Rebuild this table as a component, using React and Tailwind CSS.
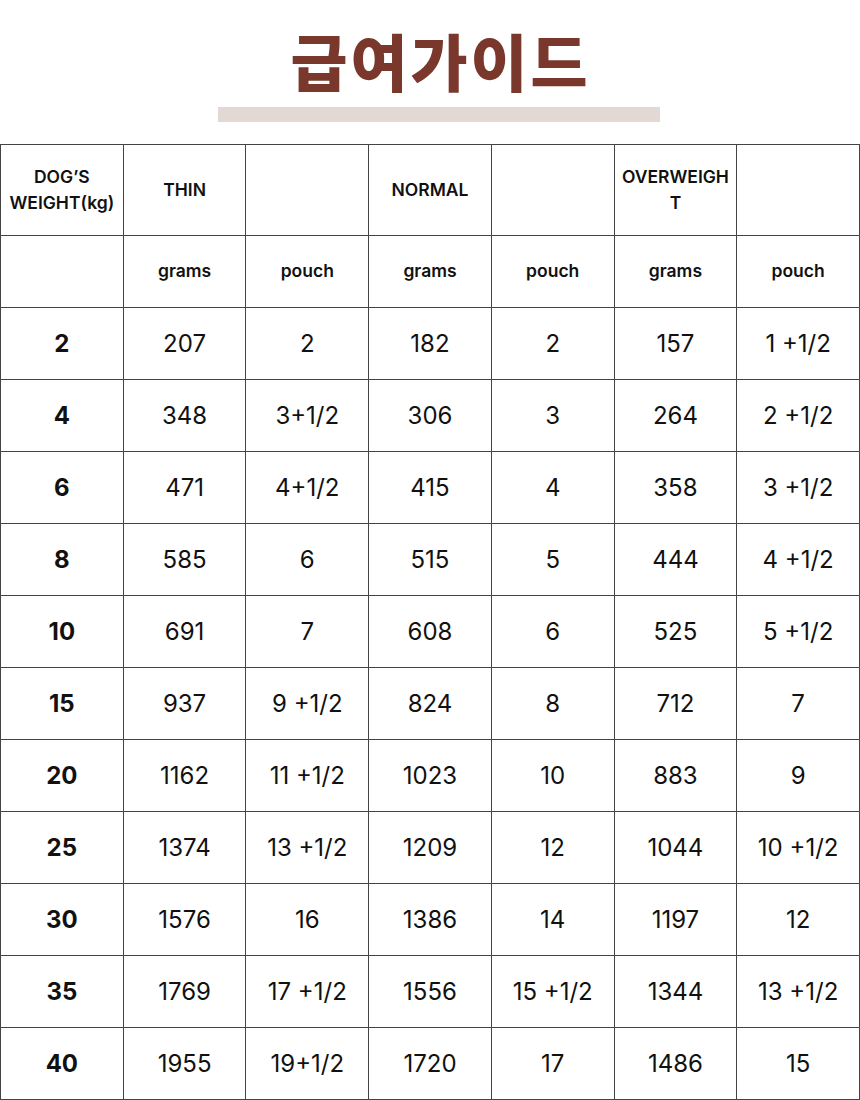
import React from "react";

const rows = [
  ["2", "207", "2", "182", "2", "157", "1 +1/2"],
  ["4", "348", "3+1/2", "306", "3", "264", "2 +1/2"],
  ["6", "471", "4+1/2", "415", "4", "358", "3 +1/2"],
  ["8", "585", "6", "515", "5", "444", "4 +1/2"],
  ["10", "691", "7", "608", "6", "525", "5 +1/2"],
  ["15", "937", "9 +1/2", "824", "8", "712", "7"],
  ["20", "1162", "11 +1/2", "1023", "10", "883", "9"],
  ["25", "1374", "13 +1/2", "1209", "12", "1044", "10 +1/2"],
  ["30", "1576", "16", "1386", "14", "1197", "12"],
  ["35", "1769", "17 +1/2", "1556", "15 +1/2", "1344", "13 +1/2"],
  ["40", "1955", "19+1/2", "1720", "17", "1486", "15"],
];

const header1 = ["DOG’S\nWEIGHT(kg)", "THIN", "", "NORMAL", "", "OVERWEIGH\nT", ""];
const header2 = ["", "grams", "pouch", "grams", "pouch", "grams", "pouch"];

export default function App() {
  return (
    <div className="w-[860px] bg-white" style={{ fontFamily: "Inter, 'Noto Sans', sans-serif" }}>
      <div className="flex flex-col items-center pt-[20px] pl-[18px]">
        <h1
          className="text-[62px] leading-[80px] font-black text-[#7a382c] tracking-[3px] pl-[3px]"
          style={{ fontFamily: "'Noto Sans CJK KR', sans-serif" }}
        >
          급여가이드
        </h1>
        <div className="w-[442px] h-[15px] bg-[#e3d9d4] mt-[7px]" />
      </div>
      <div className="mt-[22px] grid grid-cols-7 border-l border-t border-[#444] text-[#111]">
        {header1.map((h, i) => (
          <div
            key={"h1" + i}
            className="h-[91px] border-r border-b border-[#444] flex items-center justify-center text-center text-[17.5px] leading-[26px] font-semibold whitespace-pre-line"
          >
            {h}
          </div>
        ))}
        {header2.map((h, i) => (
          <div
            key={"h2" + i}
            className="h-[72px] border-r border-b border-[#444] flex items-center justify-center text-[17.5px] font-semibold"
          >
            {h}
          </div>
        ))}
        {rows.map((r, ri) =>
          r.map((c, ci) => (
            <div
              key={ri + "-" + ci}
              className={
                "h-[72px] border-r border-b border-[#444] flex items-center justify-center text-[24px] " +
                (ci === 0 ? "font-bold" : "font-normal")
              }
            >
              {c}
            </div>
          ))
        )}
      </div>
    </div>
  );
}
